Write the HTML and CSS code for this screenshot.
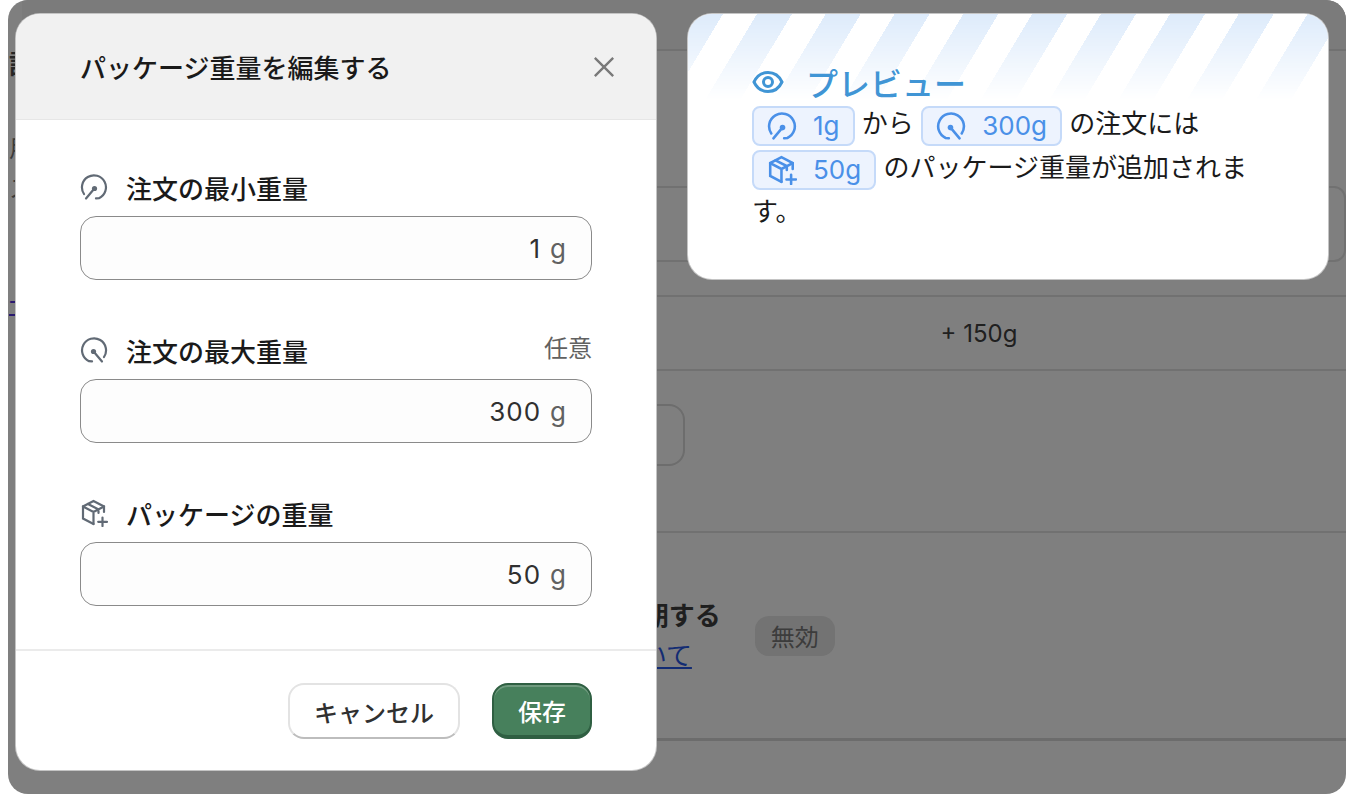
FILE: index.html
```html
<!DOCTYPE html>
<html lang="ja">
<head>
  <meta charset="UTF-8">
  <title>パッケージ重量を編集する</title>
  <meta name="viewport" content="width=device-width, initial-scale=1.0">
  <link rel="stylesheet" href="styles.css">
</head>
<body>
  <div class="frame">
    <!-- page behind the overlay -->
    <div class="back">
      <div class="backLeft">
        <div class="backHeading">設定</div>
        <div class="backText first">用</div>
        <div class="backText">ス</div>
        <div class="backLink">一</div>
      </div>
      <div class="backMain">
        <div class="backTop"></div>
        <div class="backIntro"></div>
        <div class="backCard"></div>
        <div class="backWeight">+ 150g</div>
        <div class="backAction">
          <span class="backBtn">パッケージ重量を追加する</span>
        </div>
        <div class="backSync">
          <div class="syncText">
            <div class="syncTitle">Labelと同期する</div>
            <a class="syncLink">Labelについて</a>
          </div>
          <span class="syncBadge">無効</span>
        </div>
      </div>
    </div>

    <!-- edit dialog -->
    <div class="dialog">
      <div class="dialogHead">
        <h2>パッケージ重量を編集する</h2>
        <svg class="closeIcon" viewBox="0 0 24 24"><path d="M2 2L22 22M22 2L2 22"/></svg>
      </div>
      <div class="dialogBody">
        <div class="field">
          <div class="fieldLabel">
            <svg class="icon" viewBox="0 0 28 28"><path d="M4 21A12 12 0 1 1 19 25.2L16 25.4"/><path d="M6 25.5L14 16"/><circle class="dot" cx="14.5" cy="15.5" r="2.6"/></svg>
            <span>注文の最小重量</span>
          </div>
          <div class="inputBox"><span>1</span><em>g</em></div>
        </div>
        <div class="field">
          <div class="fieldLabel">
            <svg class="icon flip" viewBox="0 0 28 28"><path d="M4 21A12 12 0 1 1 19 25.2L16 25.4"/><path d="M6 25.5L14 16"/><circle class="dot" cx="14.5" cy="15.5" r="2.6"/></svg>
            <span>注文の最大重量</span>
            <small>任意</small>
          </div>
          <div class="inputBox"><span>300</span><em>g</em></div>
        </div>
        <div class="field">
          <div class="fieldLabel">
            <svg class="icon" viewBox="0 0 28 28"><path d="M24 13V7.5L13.5 2L3 7.5V19.5L13.5 25"/><path d="M3 7.5L13.5 13L24 7.5M13.5 13V25M8 5L18.5 10.4V14"/><path d="M22.5 18.5V27M18.2 22.8H27"/></svg>
            <span>パッケージの重量</span>
          </div>
          <div class="inputBox"><span>50</span><em>g</em></div>
        </div>
      </div>
      <div class="dialogFoot">
        <button class="btn btnPlain">キャンセル</button>
        <button class="btn btnSave">保存</button>
      </div>
    </div>

    <!-- preview card -->
    <div class="preview">
      <div class="previewTitle">
        <svg class="eyeIcon" viewBox="0 0 32 24"><path d="M2 12C5 5.5 10 2.5 16 2.5S27 5.5 30 12C27 18.500 22 21.500 16 21.500S5 18.500 2 12Z"/><circle cx="16" cy="12" r="4.500"/></svg>
        <span>プレビュー</span>
      </div>
      <p class="previewText">
        <span class="chip"><svg class="chipIcon" viewBox="0 0 28 28"><path d="M4 21A12 12 0 1 1 19 25.2L16 25.4"/><path d="M6 25.500L14 16"/><circle class="dot" cx="14.500" cy="15.500" r="2.600"/></svg>1g</span> から <span class="chip"><svg class="chipIcon flip" viewBox="0 0 28 28"><path d="M4 21A12 12 0 1 1 19 25.2L16 25.4"/><path d="M6 25.500L14 16"/><circle class="dot" cx="14.500" cy="15.500" r="2.600"/></svg>300g</span> の注文には
        <span class="chip"><svg class="chipIcon" viewBox="0 0 28 28"><path d="M24 13V7.500L13.500 2L3 7.500V19.500L13.500 25"/><path d="M3 7.500L13.500 13L24 7.500M13.500 13V25M8 5L18.500 10.400V14"/><path d="M22.500 18.500V27M18.200 22.800H27"/></svg>50g</span> のパッケージ重量が追加されます。
      </p>
    </div>
  </div>
</body>
</html>
```

FILE: styles.css
```css
* {
  box-sizing: border-box;
}
body {
  margin: 0;
  height: 810px;
  overflow: hidden;
  background: #fff;
  font-family: Inter, "Noto Sans CJK JP", sans-serif;
  color: #1c1c1c;
}
svg {
  fill: none;
  stroke: currentColor;
  flex-shrink: 0;
}
.dot {
  fill: currentColor;
  stroke: none;
}
.flip {
  transform: scaleX(-1);
}

.frame {
  position: relative;
  width: 1338px;
  height: 794px;
  margin-left: 8px;
  overflow: hidden;
  border-radius: 20px;
  background: #7f7f7f;
}
.shadowless {
  box-shadow: none;
}

/* page behind */
.back {
  display: flex;
  height: 100%;
}
.backLeft {
  width: 14px;
  flex-shrink: 0;
  padding-left: 1px;
  white-space: nowrap;
  font-size: 26px;
  line-height: 34px;
  color: #262626;
}
.backHeading {
  margin-top: 48px;
  font-weight: 700;
}
.backText {
  font-size: 24px;
  color: #3a3a3a;
}
.backText.first {
  margin-top: 50px;
}
.backText + .backText {
  margin-top: 6px;
}
.backLink {
  margin-top: 80px;
  color: #2a1a70;
  text-decoration: underline;
}
.backMain {
  flex: 1;
  display: flex;
  flex-direction: column;
}
.backTop {
  height: 51px;
  flex-shrink: 0;
  background: #7b7b7b;
  border-bottom: 2px solid #717171;
}
.backIntro {
  height: 135px;
  flex-shrink: 0;
}
.backCard {
  height: 76px;
  flex-shrink: 0;
  border: 2px solid #717171;
  border-radius: 12px;
  margin-bottom: 33px;
}
.backWeight {
  height: 76px;
  flex-shrink: 0;
  display: flex;
  align-items: center;
  justify-content: center;
  padding-right: 0;
  padding-left: 590px;
  font-size: 24px;
  color: #202020;
  border-top: 2px solid #717171;
  border-bottom: 2px solid #717171;
}
.backAction {
  height: 162px;
  flex-shrink: 0;
  padding-top: 33px;
  padding-left: 300px;
  border-bottom: 2px solid #717171;
}
.backBtn {
  display: inline-flex;
  align-items: center;
  height: 62px;
  padding: 0 24px;
  font-size: 26px;
  font-weight: 500;
  color: #202020;
  border: 2px solid #6d6d6d;
  border-radius: 16px;
}
.backSync {
  height: 208px;
  flex-shrink: 0;
  display: flex;
  align-items: center;
  gap: 34px;
  padding-left: 500px;
  border-bottom: 3px solid #6c6c6c;
}
.syncTitle {
  font-size: 26px;
  font-weight: 700;
  color: #1f1f1f;
  line-height: 40px;
}
.syncLink {
  font-size: 26px;
  line-height: 40px;
  color: #132c73;
  text-decoration: underline;
}
.syncBadge {
  height: 40px;
  padding: 0 16px;
  display: flex;
  align-items: center;
  font-size: 24px;
  color: #3c3c3c;
  background: #737373;
  border-radius: 14px;
}

/* dialog */
.dialog {
  position: absolute;
  left: 8px;
  top: 14px;
  width: 640px;
  height: 756px;
  display: flex;
  flex-direction: column;
  overflow: hidden;
  background: #fff;
  border-radius: 24px;
  box-shadow: 0 0 0 1px #c4c4c4;
}
.dialogHead {
  height: 106px;
  flex-shrink: 0;
  display: flex;
  align-items: center;
  justify-content: space-between;
  padding: 0 41px 0 64px;
  background: #f1f1f1;
  border-bottom: 1px solid #e6e6e6;
}
.dialogHead h2 {
  margin: 0;
  font-size: 26px;
  font-weight: 500;
  color: #1a1a1a;
}
.closeIcon {
  width: 22px;
  height: 22px;
  color: #7a7a7a;
  stroke-width: 2.6;
}
.dialogBody {
  flex: 1;
  display: flex;
  flex-direction: column;
  gap: 52px;
  padding: 49px 64px 0;
}
.fieldLabel {
  display: flex;
  align-items: center;
  gap: 18px;
  height: 36px;
  margin-bottom: 11px;
  font-size: 26px;
  font-weight: 500;
  color: #1a1a1a;
}
.icon {
  width: 28px;
  height: 28px;
  color: #616a75;
  stroke-width: 2.2;
  stroke-linecap: round;
}
.fieldLabel small {
  margin-left: auto;
  font-size: 24px;
  font-weight: 400;
  color: #616161;
  position: relative;
  top: -4px;
}
.inputBox {
  height: 64px;
  display: flex;
  align-items: center;
  justify-content: flex-end;
  gap: 9px;
  padding-right: 24px;
  font-size: 26px;
  letter-spacing: 1px;
  color: #303030;
  background: #fdfdfd;
  border: 1px solid #8a8a8a;
  border-radius: 16px;
}
.inputBox em {
  font-style: normal;
  color: #616161;
}
.dialogFoot {
  height: 121px;
  flex-shrink: 0;
  display: flex;
  justify-content: flex-end;
  gap: 32px;
  padding: 32px 64px 0;
  border-top: 2px solid #ebebeb;
}
.btn {
  height: 56px;
  padding: 0 24px;
  font-family: inherit;
  font-size: 24px;
  font-weight: 500;
  border-radius: 16px;
}
.btnPlain {
  color: #303030;
  background: #fff;
  border: 2px solid #e3e3e3;
  border-bottom-color: #bdbdbd;
}
.btnSave {
  color: #fff;
  background: #47805c;
  border: 2px solid #2f5f42;
  border-bottom-width: 4px;
  box-shadow: inset 0 2px 0 #6f9a7e;
}

/* preview */
.preview {
  position: absolute;
  left: 680px;
  top: 14px;
  width: 640px;
  height: 265px;
  padding: 48px 64px 0;
  overflow: hidden;
  background: #fff;
  border-radius: 24px;
  box-shadow: 0 0 0 1px #c4c4c4;
}
.preview::before {
  content: "";
  position: absolute;
  left: 0;
  right: 0;
  top: 0;
  height: 86px;
  background: repeating-linear-gradient(121deg, #ddebfb 0, #ddebfb 30px, #fff 30px, #fff 59px);
  -webkit-mask-image: linear-gradient(#000, transparent);
  mask-image: linear-gradient(#000, transparent);
}
.previewTitle {
  position: relative;
  display: flex;
  align-items: center;
  gap: 22px;
  height: 40px;
  font-size: 32px;
  font-weight: 500;
  color: #4095d5;
}
.eyeIcon {
  width: 32px;
  height: 24px;
  stroke-width: 3;
}
.previewText {
  position: relative;
  margin: 0;
  font-size: 26px;
  line-height: 43px;
  color: #1a1a1a;
}
.chip {
  display: inline-flex;
  align-items: center;
  gap: 16px;
  height: 40px;
  padding: 0 13px;
  vertical-align: middle;
  font-size: 26px;
  line-height: 1;
  color: #4a90e8;
  background: #edf3fe;
  border: 2px solid #c5daf9;
  border-radius: 8px;
}
.chipIcon {
  width: 30px;
  height: 30px;
  stroke-width: 2.4;
  stroke-linecap: round;
}
```
